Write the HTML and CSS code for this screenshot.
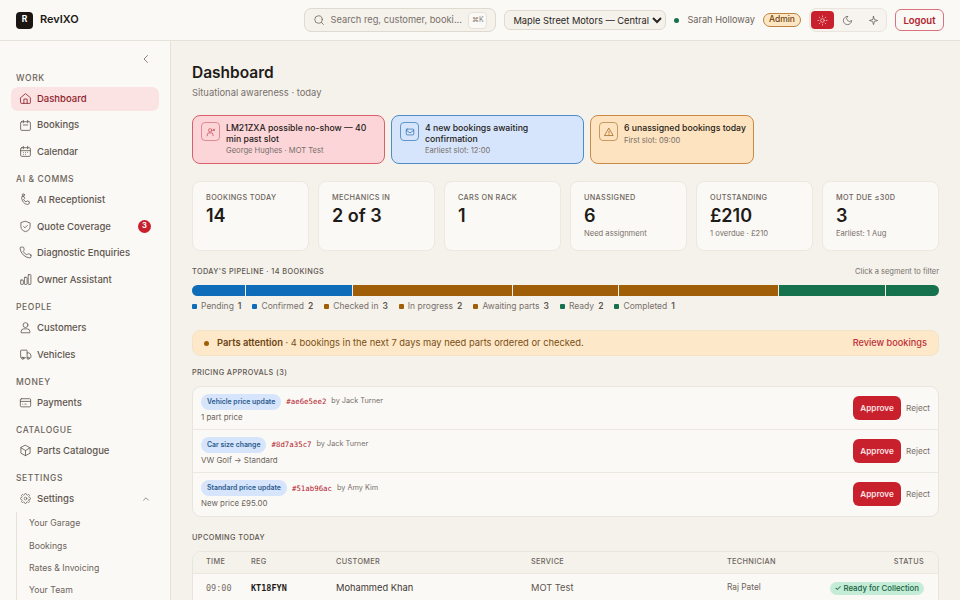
FILE: index.html
```html
<!DOCTYPE html>
<html lang="en">
<head>
<meta charset="utf-8">
<title>RevIXO - Dashboard</title>
<link rel="stylesheet" href="styles.css">
</head>
<body>

<header class="topbar">
    <div class="brand"><span class="brand-mark">R</span><span class="brand-name">RevIXO</span></div>
    <div class="search">
        <svg class="ico" viewBox="0 0 24 24"><circle cx="11" cy="11" r="7.5"/><path d="M21 21l-4.3-4.3"/></svg>
        <span class="search-text">Search reg, customer, booki...</span>
        <span class="kbd">⌘K</span>
    </div>
    <select class="garage"><option>Maple Street Motors — Central</option></select>
    <span class="online"></span>
    <span class="user">Sarah Holloway</span>
    <span class="role">Admin</span>
    <div class="theme">
        <button class="theme-btn on"><svg class="ico" viewBox="0 0 24 24"><circle cx="12" cy="12" r="4"/><path d="M12 2v2M12 20v2M4.9 4.9l1.4 1.4M17.7 17.7l1.4 1.4M2 12h2M20 12h2M4.9 19.1l1.4-1.4M17.7 6.3l1.4-1.4"/></svg></button>
        <button class="theme-btn"><svg class="ico" viewBox="0 0 24 24"><path d="M12 3a6 6 0 0 0 9 9 9 9 0 1 1-9-9z"/></svg></button>
        <button class="theme-btn"><svg class="ico" viewBox="0 0 24 24"><path d="M12 3l2 7 7 2-7 2-2 7-2-7-7-2 7-2z"/></svg></button>
    </div>
    <button class="logout">Logout</button>
</header>

<div class="layout">
    <nav class="sidebar">
        <div class="collapse"><svg class="ico" viewBox="0 0 24 24"><path d="M15 5l-7 7 7 7"/></svg></div>

        <p class="nav-label nav-label-first">WORK</p>
        <a class="nav-item cur"><svg class="ico" viewBox="0 0 24 24"><path d="M3 10.5L12 3l9 7.5V20a1 1 0 0 1-1 1H4a1 1 0 0 1-1-1z"/><path d="M9 21v-8h6v8"/></svg>Dashboard</a>
        <a class="nav-item"><svg class="ico" viewBox="0 0 24 24"><rect x="3" y="5" width="18" height="16" rx="2"/><path d="M8 2.5V7M16 2.5V7M8 11h8"/></svg>Bookings</a>
        <a class="nav-item"><svg class="ico" viewBox="0 0 24 24"><rect x="3" y="5" width="18" height="16" rx="2"/><path d="M8 2.5V7M16 2.5V7M3 10.5h18M8 14h.01M12 14h.01M16 14h.01M8 17.5h.01M12 17.5h.01"/></svg>Calendar</a>

        <p class="nav-label">AI &amp; COMMS</p>
        <a class="nav-item"><svg class="ico" viewBox="0 0 24 24"><path d="M5 9c0 6 5 12 11 12l3-1.500v-3.500l-4-1.500-2 2c-2-1-3.500-2.500-4.500-4.500l2-2L9 6.500H6z"/><circle cx="8" cy="3.500" r="2"/></svg>AI Receptionist</a>
        <a class="nav-item"><svg class="ico" viewBox="0 0 24 24"><path d="M12 2.500l8.500 3V12c0 5-3.500 8-8.500 9.500C7 20 3.500 17 3.500 12V5.500z"/><path d="M8.500 12l2.500 2.500 4.500-4.500"/></svg>Quote Coverage<span class="count">3</span></a>
        <a class="nav-item"><svg class="ico" viewBox="0 0 24 24"><path d="M22 17v3a2 2 0 0 1-2.200 2A19.800 19.800 0 0 1 2 4.200 2 2 0 0 1 4 2h3a2 2 0 0 1 2 1.700l.5 3a2 2 0 0 1-.6 1.800L7.600 9.800a16 16 0 0 0 6.600 6.600l1.300-1.300a2 2 0 0 1 1.800-.6l3 .5A2 2 0 0 1 22 17z"/></svg>Diagnostic Enquiries</a>
        <a class="nav-item"><svg class="ico" viewBox="0 0 24 24"><rect x="3" y="13" width="5" height="8" rx="1"/><rect x="10" y="8" width="5" height="13" rx="1"/><rect x="17" y="3" width="5" height="18" rx="1"/></svg>Owner Assistant</a>

        <p class="nav-label">PEOPLE</p>
        <a class="nav-item"><svg class="ico" viewBox="0 0 24 24"><circle cx="12" cy="7.500" r="4.500"/><path d="M4 21v-1.500a5 5 0 0 1 5-5h6a5 5 0 0 1 5 5V21z"/></svg>Customers</a>
        <a class="nav-item"><svg class="ico" viewBox="0 0 24 24"><path d="M12 18H4a1 1 0 0 1-1-1V5a1 1 0 0 1 1-1h10a1 1 0 0 1 1 1v13"/><path d="M15 9h4l3 4v4a1 1 0 0 1-1 1h-1"/><circle cx="7" cy="19" r="2"/><circle cx="17" cy="19" r="2"/></svg>Vehicles</a>

        <p class="nav-label">MONEY</p>
        <a class="nav-item"><svg class="ico" viewBox="0 0 24 24"><rect x="2.500" y="5" width="19" height="15" rx="2"/><path d="M2.500 10h19M7 15h.01M11 15h2"/></svg>Payments</a>

        <p class="nav-label">CATALOGUE</p>
        <a class="nav-item"><svg class="ico" viewBox="0 0 24 24"><path d="M12 2.500l8.500 4.500v10L12 21.500 3.500 17V7z"/><path d="M3.500 7L12 12l8.500-5M12 12v9.500"/></svg>Parts Catalogue</a>

        <p class="nav-label">SETTINGS</p>
        <a class="nav-item"><svg class="ico ico-gear" viewBox="0 0 24 24"><circle cx="12" cy="12" r="3"/><path d="M19.400 15a1.700 1.700 0 0 0 .3 1.800l.1.100a2 2 0 1 1-2.800 2.800l-.1-.1a1.700 1.700 0 0 0-2.900 1.200V21a2 2 0 0 1-4 0v-.1a1.700 1.700 0 0 0-2.900-1.200l-.1.100a2 2 0 1 1-2.800-2.800l.1-.1a1.700 1.700 0 0 0-1.200-2.900H3a2 2 0 0 1 0-4h.1a1.700 1.700 0 0 0 1.200-2.900l-.1-.1a2 2 0 1 1 2.800-2.800l.1.1a1.700 1.700 0 0 0 1.900.3H9a1.700 1.700 0 0 0 1-1.500V3a2 2 0 0 1 4 0v.1a1.700 1.700 0 0 0 2.900 1.200l.1-.1a2 2 0 1 1 2.800 2.800l-.1.1a1.700 1.700 0 0 0 1.200 2.900h.1a2 2 0 0 1 0 4h-.1a1.700 1.700 0 0 0-1.500 1z"/></svg>Settings<svg class="ico nav-caret" viewBox="0 0 24 24"><path d="M6 15l6-6 6 6"/></svg></a>
        <div class="subnav">
            <a>Your Garage</a>
            <a>Bookings</a>
            <a>Rates &amp; Invoicing</a>
            <a>Your Team</a>
        </div>
    </nav>

    <main class="content">
        <h1 class="page-title">Dashboard</h1>
        <p class="page-sub">Situational awareness · today</p>

        <div class="alerts">
            <div class="alert alert-red">
                <span class="alert-ico"><svg class="ico" viewBox="0 0 24 24"><circle cx="10" cy="8" r="4"/><path d="M3 21v-2a5 5 0 0 1 5-5h4a5 5 0 0 1 5 5v2M17 5l4 4M21 5l-4 4"/></svg></span>
                <div class="alert-body"><p class="alert-title">LM21ZXA possible no-show — 40 min past slot</p><p class="alert-sub">George Hughes · MOT Test</p></div>
            </div>
            <div class="alert alert-blue">
                <span class="alert-ico"><svg class="ico" viewBox="0 0 24 24"><rect x="3" y="5" width="18" height="14" rx="2"/><path d="M3 8l9 6 9-6"/></svg></span>
                <div class="alert-body"><p class="alert-title">4 new bookings awaiting confirmation</p><p class="alert-sub">Earliest slot: 12:00</p></div>
            </div>
            <div class="alert alert-amber">
                <span class="alert-ico"><svg class="ico" viewBox="0 0 24 24"><path d="M12 3.500L22 20.500H2z"/><path d="M12 10v5M12 18h.01"/></svg></span>
                <div class="alert-body"><p class="alert-title">6 unassigned bookings today</p><p class="alert-sub">First slot: 09:00</p></div>
            </div>
        </div>

        <div class="kpis">
            <div class="kpi"><p class="kpi-label">BOOKINGS TODAY</p><p class="kpi-num">14</p></div>
            <div class="kpi"><p class="kpi-label">MECHANICS IN</p><p class="kpi-num">2 of 3</p></div>
            <div class="kpi"><p class="kpi-label">CARS ON RACK</p><p class="kpi-num">1</p></div>
            <div class="kpi"><p class="kpi-label">UNASSIGNED</p><p class="kpi-num">6</p><p class="kpi-note">Need assignment</p></div>
            <div class="kpi"><p class="kpi-label">OUTSTANDING</p><p class="kpi-num">£210</p><p class="kpi-note">1 overdue · £210</p></div>
            <div class="kpi"><p class="kpi-label">MOT DUE ≤30D</p><p class="kpi-num">3</p><p class="kpi-note">Earliest: 1 Aug</p></div>
        </div>

        <div class="pipe-head">
            <span class="sec-title">TODAY'S PIPELINE · 14 BOOKINGS</span>
            <span class="pipe-hint">Click a segment to filter</span>
        </div>
        <div class="pipe-bar">
            <i class="seg blue n1"></i><i class="seg blue n2"></i><i class="seg amber n3"></i><i class="seg amber n2"></i><i class="seg amber n3"></i><i class="seg green n2"></i><i class="seg green n1"></i>
        </div>
        <ul class="legend">
            <li><i class="sw blue"></i>Pending<b>1</b></li>
            <li><i class="sw blue"></i>Confirmed<b>2</b></li>
            <li><i class="sw amber"></i>Checked in<b>3</b></li>
            <li><i class="sw amber"></i>In progress<b>2</b></li>
            <li><i class="sw amber"></i>Awaiting parts<b>3</b></li>
            <li><i class="sw green"></i>Ready<b>2</b></li>
            <li><i class="sw green"></i>Completed<b>1</b></li>
        </ul>

        <div class="banner">
            <i class="banner-dot"></i>
            <p class="banner-text"><b>Parts attention</b> · 4 bookings in the next 7 days may need parts ordered or checked.</p>
            <a class="banner-link">Review bookings</a>
        </div>

        <h2 class="sec-title sec-gap">PRICING APPROVALS (3)</h2>
        <div class="approvals">
            <div class="appr">
                <div class="appr-body">
                    <p class="appr-top"><span class="tag">Vehicle price update</span><code class="hash">#ae6e5ee2</code><span class="by">by Jack Turner</span></p>
                    <p class="appr-desc">1 part price</p>
                </div>
                <button class="approve">Approve</button><button class="reject">Reject</button>
            </div>
            <div class="appr">
                <div class="appr-body">
                    <p class="appr-top"><span class="tag">Car size change</span><code class="hash">#8d7a35c7</code><span class="by">by Jack Turner</span></p>
                    <p class="appr-desc">VW Golf → Standard</p>
                </div>
                <button class="approve">Approve</button><button class="reject">Reject</button>
            </div>
            <div class="appr">
                <div class="appr-body">
                    <p class="appr-top"><span class="tag">Standard price update</span><code class="hash">#51ab96ac</code><span class="by">by Amy Kim</span></p>
                    <p class="appr-desc">New price £95.00</p>
                </div>
                <button class="approve">Approve</button><button class="reject">Reject</button>
            </div>
        </div>

        <h2 class="sec-title sec-gap2">UPCOMING TODAY</h2>
        <div class="upcoming">
            <table>
                <colgroup><col class="c-time"><col class="c-reg"><col class="c-cust"><col class="c-serv"><col class="c-tech"><col></colgroup>
                <thead><tr><th>TIME</th><th>REG</th><th>CUSTOMER</th><th>SERVICE</th><th>TECHNICIAN</th><th class="st">STATUS</th></tr></thead>
                <tbody><tr><td class="time">09:00</td><td class="reg">KT18FYN</td><td class="cust">Mohammed Khan</td><td class="serv">MOT Test</td><td class="tech">Raj Patel</td><td class="st"><span class="pill">✓ Ready for Collection</span></td></tr></tbody>
            </table>
        </div>
    </main>
</div>

</body>
</html>
```

FILE: styles.css
```css
html,body{height:100%;}
body,h1,h2,p,ul,li{margin:0;padding:0;}
li{list-style:none;}
i{display:block;}
button{font-family:inherit;cursor:pointer;}
body{display:flex;flex-direction:column;height:600px;overflow:hidden;background:#f5f2ec;color:#1f1b18;font:11px/1.4 Inter,"Liberation Sans",sans-serif;}

.ico{width:12px;height:12px;flex:none;fill:none;stroke:currentColor;stroke-width:1.6;stroke-linecap:round;stroke-linejoin:round;}

/* top bar */
.topbar{flex:none;height:41px;box-sizing:border-box;display:flex;align-items:center;padding:0 16px;background:#fbf9f5;border-bottom:1px solid #e6e2da;}
.brand{display:flex;align-items:center;gap:7px;margin-right:auto;}
.brand-mark{width:17px;height:17px;border-radius:4px;background:#1c1612;color:#fff;font-size:8.5px;font-weight:700;display:flex;align-items:center;justify-content:center;}
.brand-name{font-size:11px;font-weight:600;}
.search{width:192px;height:24px;box-sizing:border-box;display:flex;align-items:center;gap:5px;padding:0 8px 0 8px;margin-right:8px;background:#f5f2ec;border:1px solid #dfd9cf;border-radius:7px;color:#6c645c;}
.search .ico{width:12px;height:12px;}
.search-text{flex:1;font-size:9.300px;white-space:nowrap;color:#78706a;}
.kbd{width:19px;height:17px;box-sizing:border-box;background:#fbf9f5;border:1px solid #e6e2da;border-radius:4px;font-size:7px;color:#8a827a;display:flex;align-items:center;justify-content:center;}
.garage{width:162px;height:20px;margin-right:8px;padding:0 0 0 4px;background:#f5f2ec;border:1px solid #dfd9cf;border-radius:6px;color:#2a2521;font:9.300px Inter,"Liberation Sans",sans-serif;}
.online{width:5px;height:5px;border-radius:50%;background:#15724c;margin-right:8px;}
.user{font-size:9.200px;color:#6c645c;margin-right:8px;white-space:nowrap;}
.role{height:14px;box-sizing:border-box;padding:0 5px;margin-right:8px;display:flex;align-items:center;background:#fde6c4;border:1px solid #b9843f;border-radius:8px;font-size:8.500px;font-weight:500;color:#6e4410;}
.theme{width:78px;height:24px;box-sizing:border-box;display:flex;align-items:center;gap:2px;padding:0 1px;margin-right:8px;background:#f7f4ef;border:1px solid #e9e5dd;border-radius:7px;}
.theme-btn{width:24px;height:18px;padding:0;border:0;border-radius:4px;background:none;color:#5e564f;display:flex;align-items:center;justify-content:center;}
.theme-btn .ico{width:11px;height:11px;}
.theme-btn.on{background:#c8202c;color:#fbd5d8;}
.logout{width:49px;height:22px;padding:0;background:#fbf9f5;border:1px solid #d9727a;border-radius:6px;color:#b3202c;font-size:9.500px;font-weight:600;}

.layout{flex:1;min-height:0;display:flex;}

/* sidebar */
.sidebar{flex:none;width:171px;box-sizing:border-box;padding:0 11px;overflow:hidden;background:#fbf9f5;border-right:1px solid #e6e2da;}
.collapse{height:36px;padding-right:7px;display:flex;align-items:center;justify-content:flex-end;color:#6c645c;}
.nav-label{margin:9.600px 5px 2.500px;font-size:8.500px;line-height:12px;font-weight:500;letter-spacing:.6px;color:#6c645c;}
.nav-label-first{margin-top:-5px;}
.nav-item{height:24px;margin-bottom:2.600px;padding:0 8px 0 8px;display:flex;align-items:center;gap:5px;border-radius:7px;font-size:9.500px;font-weight:500;color:#5e564f;}
.nav-item .ico{width:13px;height:13px;stroke-width:1.500;}
.nav-item .ico-gear{width:11px;height:11px;margin:0 1px;}
.cur{background:#fbe3e3;color:#8f1d2a;}
.count{margin-left:auto;width:13px;height:13px;border-radius:50%;background:#c8202c;color:#fff;font-size:7.500px;font-weight:700;display:flex;align-items:center;justify-content:center;}
.nav-item .nav-caret{margin-left:auto;width:10px;height:10px;}
.subnav{margin:-1px 0 0 5px;padding-left:12px;border-left:1px solid #e6e2da;}
.subnav a{display:block;height:22.400px;line-height:22.400px;font-size:8.700px;color:#6c645c;white-space:nowrap;}

/* main column */
.content{flex:1;min-width:0;box-sizing:border-box;padding:21px 21px 0;overflow:hidden;}
.page-title{font-size:15.500px;line-height:22px;font-weight:600;color:#1f1b18;}
.page-sub{margin-top:2px;font-size:9.400px;line-height:14px;color:#78706a;}

.alerts{display:flex;gap:6px;margin-top:15px;}
.alert{width:193px;height:49px;box-sizing:border-box;padding:6px 12px 0 8px;display:flex;gap:6px;border:1px solid;border-radius:8px;}
.alert:last-child{width:164px;padding-right:2px;}
.alert-red{background:#fbd5d8;border-color:#d9606a;}
.alert-blue{background:#d6e5fb;border-color:#4f8cc4;}
.alert-amber{background:#fde3bf;border-color:#c98a45;}
.alert-ico{flex:none;width:19px;height:19px;box-sizing:border-box;border:1px solid;border-radius:4px;display:flex;align-items:center;justify-content:center;}
.alert-ico .ico{width:10px;height:10px;stroke-width:1.700;}
.alert-red .alert-ico{color:#c8404c;border-color:#e08a92;}
.alert-blue .alert-ico{color:#2a6fa8;border-color:#5f96c8;}
.alert-amber .alert-ico{color:#9a5e14;border-color:#c49a60;}
.alert-body{padding-top:1px;}
.alert-title{font-size:8.700px;line-height:10.700px;font-weight:500;color:#1f1b18;}
.alert-sub{margin-top:1px;font-size:7.600px;line-height:11px;color:#78706a;}

.kpis{display:grid;grid-template-columns:repeat(6,1fr);gap:9px;margin-top:17px;}
.kpi{height:70px;box-sizing:border-box;padding:10px 13px 0;background:#fbf9f5;border:1px solid #ece8e0;border-radius:8px;}
.kpi-label{font-size:7.300px;line-height:11px;font-weight:500;letter-spacing:.35px;color:#6c645c;}
.kpi-num{margin-top:1px;font-size:18px;line-height:24px;font-weight:600;color:#1f1b18;}
.kpi-note{font-size:7.600px;line-height:11px;color:#78706a;}

.sec-title{display:block;font-size:7.300px;line-height:12px;font-weight:500;letter-spacing:.4px;color:#5e564f;}
.pipe-head{display:flex;justify-content:space-between;align-items:center;margin-top:15px;}
.pipe-hint{font-size:7.500px;line-height:12px;color:#78706a;}
.pipe-bar{display:flex;gap:1px;height:11px;margin-top:7px;border-radius:6px;overflow:hidden;}
.seg{min-width:0;}
.n1{flex:1;}
.n2{flex:2;}
.n3{flex:3;}
.blue{background:#0f6cb8;}
.amber{background:#a15e08;}
.green{background:#15724c;}
.legend{display:flex;gap:11px;margin-top:4px;height:12px;}
.legend li{display:flex;align-items:center;font-size:8.500px;line-height:12px;color:#78706a;white-space:nowrap;}
.legend b{margin-left:4px;font-weight:600;color:#5e564f;}
.sw{width:5px;height:5px;margin-right:4px;border-radius:1px;}

.banner{display:flex;align-items:center;height:26px;box-sizing:border-box;margin-top:18px;padding:0 11px 0 11px;background:#fde8c9;border:1px solid #f5e3c8;border-radius:8px;}
.banner-dot{width:5px;height:5px;margin-right:8px;border-radius:50%;background:#a15e08;}
.banner-text{flex:1;font-size:9.350px;color:#7a4e14;}
.banner-text b{font-weight:600;color:#6e4410;}
.banner-link{font-size:9.200px;font-weight:500;color:#c03038;}

.sec-gap{margin-top:11px;}
.approvals{margin-top:7px;background:#fbf9f5;border:1px solid #e9e5dd;border-radius:9px;}
.appr{height:43px;box-sizing:border-box;padding:0 8px;display:flex;align-items:center;border-bottom:1px solid #ece8e0;}
.appr:last-child{border-bottom:0;}
.appr-body{flex:1;min-width:0;}
.appr-top{display:flex;align-items:center;gap:5px;}
.tag{padding:0 6px;height:16px;line-height:16px;border-radius:8px;background:#d6e5fb;color:#2a5a8e;font-size:6.900px;font-weight:600;white-space:nowrap;}
.hash{font:7.400px "DejaVu Sans Mono","Liberation Mono",monospace;color:#b3202c;}
.by{font-size:7.300px;color:#78706a;}
.appr-desc{margin-top:1px;font-size:7.900px;line-height:12px;color:#6c645c;}
.approve{width:48px;height:24px;margin-top:-1px;padding:0;border:0;border-radius:6px;background:#c8202c;color:#fbe3e3;font-size:8.200px;font-weight:600;}
.reject{margin:-1px 0 0 5px;padding:0;width:24px;border:0;background:none;color:#78706a;font-size:8.200px;white-space:nowrap;}

.sec-gap2{margin-top:15px;}
.upcoming{margin-top:7px;background:#fbf9f5;border:1px solid #e9e5dd;border-radius:9px 9px 0 0;overflow:hidden;}
table{width:100%;table-layout:fixed;border-collapse:collapse;}
.c-time{width:58px;}
.c-reg{width:85px;}
.c-cust{width:195px;}
.c-serv{width:196px;}
.c-tech{width:80px;}
th{height:21px;padding:0 14px;text-align:left;background:#f5f2ec;border-bottom:1px solid #ece8e0;font-size:7.300px;font-weight:500;letter-spacing:.35px;color:#6c645c;}
td{height:28px;padding:0 14px;font-size:9.300px;color:#3e3833;white-space:nowrap;overflow:hidden;}
th:nth-child(n+2),td:nth-child(n+2){padding-left:0;}
th:first-child,td:first-child{padding-left:13px;}
.st{text-align:right;}
.time{font:8.500px "DejaVu Sans Mono","Liberation Mono",monospace;color:#78706a;}
.reg{font:700 8.500px "DejaVu Sans Mono","Liberation Mono",monospace;color:#1f1b18;}
.serv{color:#5e564f;}
.tech{font-size:8.300px;color:#6c645c;}
.pill{display:inline-block;padding:0 5px;height:13px;line-height:13px;border-radius:7px;background:#c5ecd6;color:#15623f;font-size:7.800px;font-weight:500;}
```
